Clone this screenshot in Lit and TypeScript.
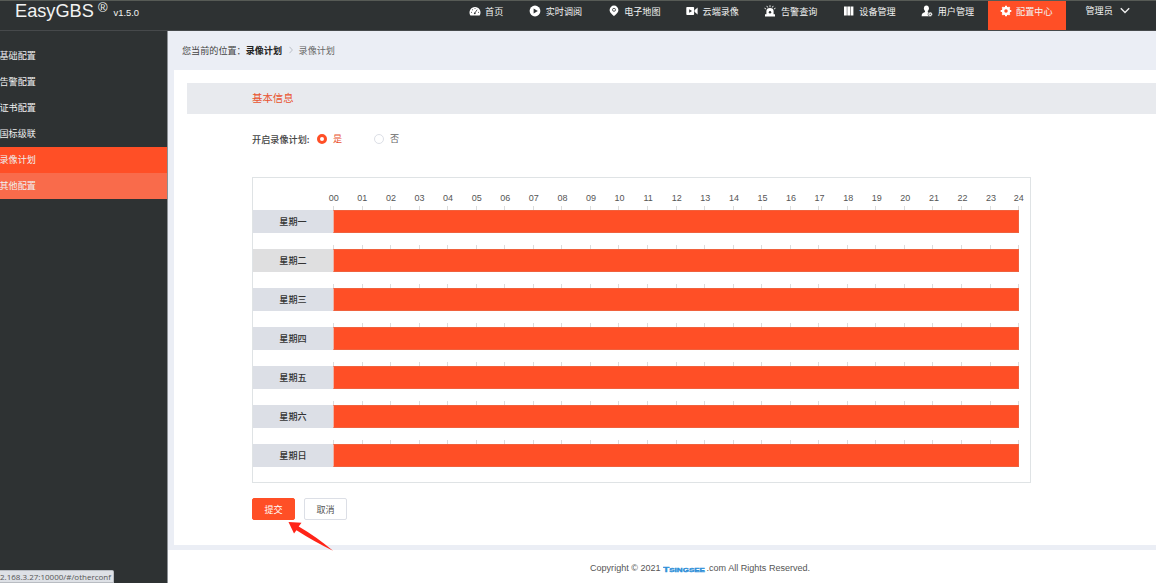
import { LitElement, html, css, svg } from "lit";
import { customElement } from "lit/decorators.js";
import { classMap } from "lit/directives/class-map.js";

const icons: Record<string, unknown> = {
  home: svg`<path fill="#fff" d="M1.2 10.2A5.5 5.5 0 1 1 10.8 10.2Q10.5 10.6 10 10.6H2Q1.5 10.6 1.2 10.2Z"/><path d="M5.6 8.3 8.2 4.6" stroke="#2e3233" stroke-width=".8"/><g fill="#2e3233"><circle cx="2.5" cy="7.3" r=".5"/><circle cx="3.6" cy="4.7" r=".5"/><circle cx="6" cy="3.6" r=".5"/><circle cx="9.5" cy="7.3" r=".5"/><circle cx="5.8" cy="8.3" r=".9"/></g>`,
  play: svg`<circle cx="6" cy="6" r="5.4" fill="#fff"/><path d="M4.6 3.4 8.8 6 4.6 8.6Z" fill="#2e3233"/>`,
  pin: svg`<path fill="#fff" d="M6 .6A4.4 4.4 0 0 1 10.4 5C10.4 7.8 7.5 9.6 6 11.2 4.5 9.6 1.6 7.8 1.6 5A4.4 4.4 0 0 1 6 .6Z"/><circle cx="6" cy="4.8" r="1.5" fill="none" stroke="#2e3233" stroke-width=".8"/>`,
  video: svg`<rect x=".3" y="2" width="7.8" height="8" rx=".8" fill="#fff"/><path fill="#fff" d="M8.5 5.2 11.6 2.4V9.6L8.5 6.8Z"/><path d="M3.2 4.2 6 6 3.2 7.8Z" fill="#2e3233"/>`,
  alarm: svg`<path fill="#fff" d="M2.4 9.3V5.9A3.6 3 0 0 1 9.6 5.9V9.3H11V11.4H1V9.3Z"/><path d="M6 .3V2.2M2.8 .9 3.7 2.5M9.2 .9 8.3 2.5M.5 3.2 2 4M11.5 3.2 10 4" stroke="#fff" stroke-width=".9"/><circle cx="6" cy="7.2" r="1.2" fill="#2e3233"/>`,
  device: svg`<rect x="1" y="1.5" width="2.8" height="9" fill="#fff"/><rect x="4.3" y="1.5" width="2.8" height="9" fill="#fff"/><rect x="7.6" y="1.5" width="2.8" height="9" fill="#fff"/>`,
  user: svg`<ellipse cx="5.4" cy="3.3" rx="2.5" ry="2.9" fill="#fff"/><path fill="#fff" d="M4 5.6H6.8V7.2L9.5 8.4 10 11.2H.6Q.6 8.4 2 7.9L4 7.1Z"/><circle cx="9.2" cy="9.2" r="2.2" fill="#fff" stroke="#2e3233" stroke-width=".6"/><circle cx="9.2" cy="9.2" r=".7" fill="#2e3233"/>`,
  gear: svg`<circle cx="6" cy="6" r="3" fill="none" stroke="#fff" stroke-width="2.5"/><path d="M6 .7V2.2M6 9.8V11.3M.7 6H2.2M9.8 6H11.3M2.3 2.3 3.4 3.4M8.6 8.6 9.7 9.7M2.3 9.7 3.4 8.6M8.6 3.4 9.7 2.3" stroke="#fff" stroke-width="2"/>`,
};

const tabs = [
  ["home", "首页"],
  ["play", "实时调阅"],
  ["pin", "电子地图"],
  ["video", "云端录像"],
  ["alarm", "告警查询"],
  ["device", "设备管理"],
  ["user", "用户管理"],
  ["gear", "配置中心"],
];

@customElement("top-bar")
class TopBar extends LitElement {
  static styles = css`
    :host { display: flex; justify-content: space-between; box-sizing: border-box; height: 31px;
      background: #2e3233; color: #f2f2f2; border-top: 1px solid #575b56; border-bottom: 1px solid #46494b; }
    .brand { display: flex; padding-left: 15px; font: 18.2px/20px "Liberation Sans", sans-serif; white-space: nowrap; }
    .name { width: 79px; }
    .mark { font-size: 13px; line-height: 13px; padding-left: 4px; width: 15.5px; }
    .version { font-size: 9.4px; line-height: 24px; }
    .nav { display: flex; }
    .tab { display: flex; box-sizing: border-box; width: 78.4px; padding-left: 12px; gap: 4.5px; height: 29px; white-space: nowrap; line-height: 20px; }
    .tab.short { width: 60.7px; }
    .tab.active { background: #ff4f26; }
    .icon { width: 12px; height: 12px; margin-top: 4px; flex: none; }
    .admin { display: flex; width: 70.5px; padding-left: 19.5px; gap: 7px; line-height: 19px; white-space: nowrap; }
    .chevron { width: 10px; height: 7px; margin-top: 6px; }
  `;
  render() {
    return html`
      <div class="brand"><span class="name">EasyGBS</span><span class="mark">®</span><span class="version">v1.5.0</span></div>
      <nav class="nav">
        ${tabs.map(([icon, label]) => html`
          <div class=${classMap({ tab: true, short: label.length < 4, active: icon === "gear" })}>
            <svg class="icon" viewBox="0 0 12 12">${icons[icon]}</svg><span>${label}</span>
          </div>`)}
        <div class="admin"><span>管理员</span>
          <svg class="chevron" viewBox="0 0 10 7"><path d="M.8 1.2 5 5.4 9.2 1.2" fill="none" stroke="#eee" stroke-width="1.4"/></svg>
        </div>
      </nav>`;
  }
}

@customElement("side-menu")
class SideMenu extends LitElement {
  static styles = css`
    :host { display: block; box-sizing: border-box; width: 168px; flex: none; background: #2e3233; padding-top: 12px; border-right: 1px solid #8d9196; }
    .item { height: 26px; line-height: 25px; color: #f0f0f0; text-indent: -0.5px; white-space: nowrap; }
    .active { background: #ff4f26; }
    .hover { background: #f96b4b; }
  `;
  render() {
    return ["基础配置", "告警配置", "证书配置", "国标级联", "录像计划", "其他配置"].map(
      (t, i) => html`<div class=${classMap({ item: true, active: i === 4, hover: i === 5 })}>${t}</div>`
    );
  }
}

@customElement("week-plan")
class WeekPlan extends LitElement {
  static styles = css`
    :host { display: block; box-sizing: border-box; width: 779px; height: 306px; border: 1px solid #dfe3e5; padding-top: 13px; }
    .hours { display: flex; margin-left: 66.5px; height: 15px; font: 9px/15px "Liberation Sans", sans-serif; color: #555; }
    .hour { width: 28.58px; flex: none; text-align: center; }
    .hour:last-child { text-indent: -2px; }
    .ticks { display: flex; margin-left: 80px; height: 4px; }
    .tick { box-sizing: border-box; width: 28.55px; flex: none; border-left: 1px solid #dcdcdc; }
    .tick:last-child { width: 1px; }
    .row { display: flex; height: 23px; margin-bottom: 12px; }
    .day { width: 80px; text-align: center; line-height: 23px; background: #dcdfe6; color: #333; font-weight: 500; }
    .day.alt { background: #dfdfe0; }
    .bar { box-sizing: border-box; width: 686px; background: #ff4f26; border: 1px solid #f0613d; border-left-color: #efb2a5; }
  `;
  render() {
    const hours = Array.from({ length: 25 }, (_, i) => i);
    return html`
      <div class="hours">${hours.map((h) => html`<span class="hour">${String(h).padStart(2, "0")}</span>`)}</div>
      ${["一", "二", "三", "四", "五", "六", "日"].map((d, i) => html`
        <div class="ticks">${hours.map(() => html`<i class="tick"></i>`)}</div>
        <div class="row"><span class=${classMap({ day: true, alt: i === 1 })}>星期${d}</span><span class="bar"></span></div>`)}`;
  }
}

@customElement("app-root")
class AppRoot extends LitElement {
  static styles = css`
    :host { display: flex; flex-direction: column; position: relative; width: 1156px; height: 583px; overflow: hidden; background: #fff;
      font: 9.1px "Noto Sans CJK SC", sans-serif; }
    .body { display: flex; flex: 1; min-height: 0; }
    .main { flex: 1; display: flex; flex-direction: column; min-width: 0; }
    .work { background: #ebeef5; height: 519px; padding-left: 6px; box-sizing: border-box; }
    .crumbs { display: flex; height: 39px; line-height: 38px; padding-left: 8px; color: #444; white-space: nowrap; }
    .crumbs b { color: #222; font-weight: 700; }
    .sep { width: 4px; height: 8px; margin: 15px 6px 0 6.5px; }
    .last { color: #666; }
    .panel { background: #fff; height: 475px; box-sizing: border-box; padding: 13px 0 0 13px; }
    .title { background: #e8eaee; height: 31px; line-height: 29px; padding-left: 65px; font-size: 10.4px; color: #e9532f; }
    .content { padding-left: 65px; }
    .choice { display: flex; align-items: center; height: 20px; margin: 15px 0 28px; color: #444; }
    .prompt { width: 65px; font-size: 9.15px; font-weight: 500; white-space: nowrap; }
    .radio { box-sizing: border-box; width: 10px; height: 10px; border-radius: 50%; border: 1px solid #dcdfe6; margin-right: 6px; }
    .radio.on { border: 3.4px solid #ff4f26; }
    .yes, .no { line-height: 14px; margin-top: -2px; }
    .yes { color: #e9532f; width: 41px; }
    .no { color: #666; }
    .actions { display: flex; gap: 9px; margin-top: 15px; }
    .btn { box-sizing: border-box; width: 43px; height: 22px; line-height: 20px; text-align: center; border: 1px solid #dcdfe6; border-radius: 2px; color: #555; background: #fff; }
    .btn.primary { background: #ff4f26; border-color: #ff4f26; color: #fff; }
    .footer { display: flex; align-items: center; padding: 3px 0 0 422px; height: 30px; font: 9.05px "Liberation Sans", sans-serif; color: #555; white-space: nowrap; }
    .logo { width: 43px; margin: 0 1px 0 2px; height: 9px; }
    .arrow { position: absolute; left: 288px; top: 521px; width: 46px; height: 31px; }
    .status { position: absolute; left: 0; bottom: 0; box-sizing: border-box; width: 114px; height: 13px; background: #dee1e6; border: 1px solid #b8bcc2; border-left: 0;
      border-radius: 0 2px 0 0; font: 8px/12px "Open Sans", sans-serif; color: #555; white-space: nowrap; }
  `;
  render() {
    return html`
      <top-bar></top-bar>
      <div class="body">
        <side-menu></side-menu>
        <div class="main">
          <div class="work">
            <div class="crumbs"><span>您当前的位置：</span><b>录像计划</b>
              <svg class="sep" viewBox="0 0 4 8"><path d="M.5 .8 3.4 4 .5 7.2" fill="none" stroke="#b5b9c2" stroke-width=".9"/></svg>
              <span class="last">录像计划</span></div>
            <div class="panel">
              <div class="title">基本信息</div>
              <div class="content">
                <div class="choice"><span class="prompt">开启录像计划:</span><i class="radio on"></i><span class="yes">是</span><i class="radio"></i><span class="no">否</span></div>
                <week-plan></week-plan>
                <div class="actions"><div class="btn primary">提交</div><div class="btn">取消</div></div>
              </div>
            </div>
          </div>
          <div class="footer"><span>Copyright © 2021</span>
            <svg class="logo" viewBox="0 0 43 9"><text y="7.6" textLength="42" lengthAdjust="spacingAndGlyphs" font-family="Liberation Sans" font-weight="700" fill="#2f8fd8" stroke="#2f8fd8" stroke-width=".4"><tspan font-size="7.6">T</tspan><tspan font-size="6">SINGSEE</tspan></text></svg>
            <span>.com All Rights Reserved.</span></div>
        </div>
      </div>
      <svg class="arrow" viewBox="0 0 46 31"><path fill="#ff2418" d="M.5 1 13.5 1.8 10.7 5.4Q29 16 45 29.8 25 20 8.5 9.3L6 12.5Z"/></svg>
      <div class="status">2.168.3.27:10000/#/otherconf</div>`;
  }
}
